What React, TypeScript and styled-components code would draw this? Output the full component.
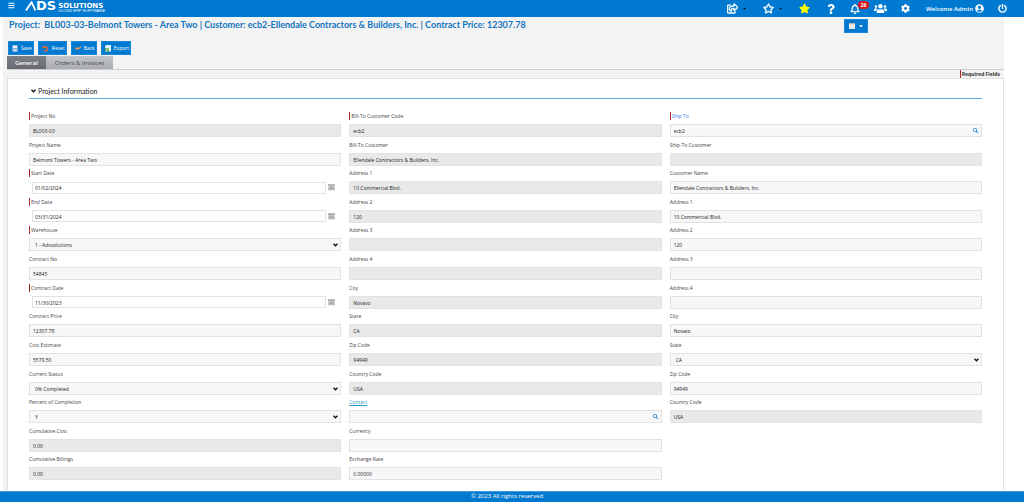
import React, { useId } from "react";
import styled, { createGlobalStyle, css } from "styled-components";
import {
  FaBars,
  FaCaretDown,
  FaCog,
  FaPowerOff,
  FaQuestion,
  FaRegBell,
  FaRegShareSquare,
  FaRegStar,
  FaSearch,
  FaStar,
  FaUserCircle,
  FaUsers,
} from "react-icons/fa";

const BLUE = "#007ad0";

const GlobalStyle = createGlobalStyle`
  * { box-sizing: border-box; }
  body {
    margin: 0;
    background: #fff;
    color: #444;
    font-family: "Open Sans", "Noto Sans", sans-serif;
    font-size: 5px;
  }
  button, input, select { font-family: inherit; }
`;

const Page = styled.div`
  display: flex;
  flex-direction: column;
  min-height: 100vh;
`;

/* ---------- top bar ---------- */

const TopBar = styled.header`
  display: flex;
  align-items: center;
  height: 17px;
  padding: 0 17px 0 8px;
  background: ${BLUE};
  color: #fff;
`;

const IconButton = styled.button<{ $color?: string }>`
  display: flex;
  align-items: center;
  gap: 4px;
  padding: 0;
  border: 0;
  background: none;
  color: ${(p) => p.$color ?? "#fff"};
  position: relative;
`;

const MenuButton = styled(IconButton)`
  margin: 0 10px 6px 0;
`;

const Brand = styled.a`
  display: flex;
  align-items: center;
  height: 12px;
  margin-bottom: 5px;
  color: #fff;
  text-decoration: none;
  font-family: "DejaVu Sans", sans-serif;
`;

const BrandMark = styled.span`
  font-size: 13px;
  line-height: 12px;
  font-weight: 700;
`;

const BrandWords = styled.span`
  display: flex;
  flex-direction: column;
  margin-left: 2px;
  padding-top: 4px;
`;

const BrandName = styled.span`
  font-size: 7px;
  line-height: 6px;
  font-weight: 700;
`;

const BrandTag = styled.span`
  font-family: "Liberation Sans", sans-serif;
  font-size: 4px;
  line-height: 4px;
`;

const Nav = styled.nav`
  display: flex;
  align-items: center;
  gap: 16px;
  margin-left: auto;
`;

const NavGroup = styled.div`
  display: flex;
  align-items: center;
  gap: 14px;
`;

const Caret = styled(FaCaretDown)`
  color: #111;
`;

const Badge = styled.span`
  position: absolute;
  left: 8px;
  top: -3px;
  width: 11px;
  height: 8px;
  border-radius: 4px;
  background: #d8141c;
  color: #fff;
  font-size: 5px;
  line-height: 8px;
  font-weight: 700;
  text-align: center;
`;

const Account = styled.a`
  display: flex;
  align-items: center;
  gap: 2px;
  margin-left: 2px;
  color: #fff;
  font-size: 6px;
  line-height: 8px;
  font-weight: 600;
  text-decoration: none;
`;

/* ---------- page heading ---------- */

const Main = styled.main`
  flex: 1;
  display: flex;
  flex-direction: column;
  margin: 0 20px 0 3px;
  padding-left: 4px;
  background: #f3f3f3;
`;

const Heading = styled.div`
  display: flex;
  align-items: flex-start;
  justify-content: space-between;
  padding: 2px 136px 0 2px;
`;

const Title = styled.h1`
  margin: 0;
  color: #1273c0;
  font-family: Lato, "Noto Sans", sans-serif;
  font-size: 9px;
  line-height: 11px;
  font-weight: 700;
  white-space: pre;
`;

const blueButton = css`
  display: flex;
  align-items: center;
  justify-content: center;
  height: 14px;
  border: 1px solid #1a86d6;
  background: ${BLUE};
  color: #fff;
`;

const ViewButton = styled.button`
  ${blueButton}
  gap: 3px;
  width: 24px;
  padding: 0;
`;

const Toolbar = styled.div`
  display: flex;
  gap: 4px;
  margin: 8px 0 1px 1px;
`;

const ToolButton = styled.button`
  ${blueButton}
  gap: 3px;
  padding: 0 1px 0 3px;
  font-size: 5px;
  line-height: 8px;
  font-weight: 400;
`;

const Tabs = styled.div`
  display: flex;
  border-bottom: 1px solid #cfcfcf;
`;

const Tab = styled.button<{ $active?: boolean }>`
  height: 13px;
  padding: 0 ${(p) => (p.$active ? "8px" : "9px")};
  border: 0;
  background: ${(p) =>
    p.$active
      ? "linear-gradient(#7d8084, #66696d)"
      : "linear-gradient(#c3c5c7, #a9adb1)"};
  color: ${(p) => (p.$active ? "#fff" : "#44474b")};
  font-size: 6px;
  line-height: 12px;
  font-weight: ${(p) => (p.$active ? 600 : 400)};
`;

const RequiredNote = styled.div`
  display: flex;
  justify-content: flex-end;
  padding-right: 4px;
  color: #333;
  font-size: 5px;
  line-height: 8px;
  font-weight: 700;
`;

/* ---------- form ---------- */

const Card = styled.section`
  flex: 1;
  display: flex;
  flex-direction: column;
  padding: 7px 21px 7px;
  border: 1px solid #e0e0e0;
  border-bottom: 0;
  background: #fff;
`;

const SectionTitle = styled.h2`
  display: flex;
  align-items: center;
  gap: 2px;
  margin: 0 0 13px;
  padding: 0 0 2px 2px;
  border-bottom: 1px solid #5caae0;
  color: #222;
  font-family: Lato, "Noto Sans", sans-serif;
  font-size: 7px;
  line-height: 10px;
  font-weight: 400;
`;

const Form = styled.form`
  flex: 1;
  display: grid;
  grid-template-columns: repeat(3, 1fr);
  column-gap: 8px;
`;

const Column = styled.div`
  display: grid;
  grid-template-rows: repeat(13, 1fr);
`;

const Field = styled.div`
  display: flex;
  flex-direction: column;
  gap: 4px;
`;

const Label = styled.label<{ $required?: boolean }>`
  align-self: flex-start;
  padding-left: ${(p) => (p.$required ? "1px" : "0")};
  border-left: ${(p) => (p.$required ? "1px solid #a52a2a" : "0")};
  font-size: 5px;
  line-height: 8px;

  a { color: #3d7bf0; text-decoration: none; }
  a.underlined { color: #2a93c4; text-decoration: underline; }
`;

const Control = styled.div`
  display: flex;
  align-items: center;
  position: relative;
  height: 13px;
`;

const boxStyle = css`
  height: 13px;
  border: 1px solid #e0e2e4;
  border-radius: 0;
  outline: 0;
  color: #222;
  font-size: 5px;
  line-height: 8px;
`;

const TextInput = styled.input`
  ${boxStyle}
  width: 100%;
  padding: 1px 3px 0;
  background: #f7f7f7;

  &:disabled { background: #e9e9e9; }
`;

const DateInput = styled.input`
  ${boxStyle}
  flex: 1;
  height: 12px;
  margin-left: 3px;
  padding: 1px 2px 0;
  background: #fff;
`;

const DateButton = styled.button`
  display: flex;
  margin: 0 6px 0 2px;
  padding: 0;
  border: 0;
  background: none;
`;

const Select = styled.select`
  ${boxStyle}
  width: 100%;
  padding: 1px 5px 0;
  appearance: none;
  background: #f7f7f7;
`;

const SelectArrow = styled.span`
  position: absolute;
  right: 3px;
  top: 5px;
  display: flex;
  pointer-events: none;
`;

const SearchButton = styled.button`
  position: absolute;
  right: 4px;
  top: 4px;
  display: flex;
  padding: 0;
  border: 0;
  background: none;
  color: #1b7fd0;
`;

const Footer = styled.footer`
  height: 11px;
  border-top: 1px solid #3f9ae0;
  background: ${BLUE};
  color: #fff;
  font-size: 6px;
  line-height: 9px;
  text-align: center;
  padding-right: 10px;
`;

/* ---------- drawings ---------- */

const Peak = () => (
  <svg width="11" height="10" viewBox="0 0 11 10" fill="none">
    <path d="M1 9.4 6.6 1.2 10.4 9.4" stroke="#fff" strokeWidth="1.8" />
  </svg>
);

const Chevron = () => (
  <svg width="5" height="4" viewBox="0 0 5 4" fill="none">
    <path d="M.5.8 2.5 2.8 4.5.8" stroke="#111" strokeWidth="1.4" />
  </svg>
);

const CalendarIcon = () => (
  <svg width="7" height="7" viewBox="0 0 7 7">
    <path d="M0 .5h7v6H0z" fill="#d0d0d0" />
    <path d="M0 .5h7v1H0z" fill="#909090" />
    <path d="M2.5 2.6h2v1h1v1h1v1h-6v-1h1v-1h1z" fill="#a6a6a6" />
  </svg>
);

const SaveIcon = () => (
  <svg width="6" height="7" viewBox="0 0 6 7">
    <path d="M0 .5h6v6H0z" fill="#7ba7e0" />
    <path d="M1 .5h4v2.6H1z" fill="#f4f7fb" />
    <path d="M1.2 4.3h3.6v2.2H1.2z" fill="#d8dfe8" />
  </svg>
);

const ResetIcon = () => (
  <svg width="7" height="7" viewBox="0 0 7 7" fill="none">
    <path d="M1.2 2h2.6a2 2 0 1 1-1.9 3" stroke="#d9683a" strokeWidth="1.4" />
    <path d="M0 2 2.3.1v3.8z" fill="#d9683a" />
  </svg>
);

const BackIcon = () => (
  <svg width="6" height="6" viewBox="0 0 6 6" fill="none">
    <path d="M1.5 3.4h2.6L6 1.8" stroke="#ef9a5c" strokeWidth="1.3" />
    <path d="M0 3.4 2.3 1.4v4z" fill="#ef9a5c" />
  </svg>
);

const ExportIcon = () => (
  <svg width="6" height="7" viewBox="0 0 6 7">
    <path d="M1 0h5v6.5H0V2z" fill="#e9f0f6" />
    <path d="M0 3.2h4v3.3H0z" fill="#4fae54" />
    <path d="m.8 5.8 2.3-2" stroke="#fff" strokeWidth=".8" />
  </svg>
);

const GridIcon = () => (
  <svg width="6" height="6" viewBox="0 0 6 6">
    <path d="M0 0h6v6H0z" fill="#efe9e4" />
    <path d="M0 0h6v1.3H0z" fill="#b9b4b0" />
  </svg>
);

/* ---------- data ---------- */

type FieldSpec = {
  label: string;
  value?: string;
  kind?: "text" | "date" | "select" | "search";
  required?: boolean;
  disabled?: boolean;
  link?: "plain" | "underlined";
};

const projectFields: FieldSpec[] = [
  { label: "Project No", value: "BL003-03", required: true, disabled: true },
  { label: "Project Name", value: "Belmont Towers - Area Two" },
  { label: "Start Date", value: "01/02/2024", kind: "date", required: true },
  { label: "End Date", value: "03/31/2024", kind: "date", required: true },
  { label: "Warehouse", value: "1 - Adssolutions", kind: "select", required: true },
  { label: "Contract No", value: "54845" },
  { label: "Contract Date", value: "11/30/2023", kind: "date", required: true },
  { label: "Contract Price", value: "12307.78" },
  { label: "Cost Estimate", value: "5579.50" },
  { label: "Current Status", value: "0% Completed", kind: "select" },
  { label: "Percent of Completion", value: "Y", kind: "select" },
  { label: "Cumulative Cost", value: "0.00", disabled: true },
  { label: "Cumulative Billings", value: "0.00", disabled: true },
];

const billToFields: FieldSpec[] = [
  { label: "Bill-To Customer Code", value: "ecb2", required: true, disabled: true },
  { label: "Bill-To Customer", value: "Ellendale Contractors & Builders, Inc.", disabled: true },
  { label: "Address 1", value: "10 Commercial Blvd.", disabled: true },
  { label: "Address 2", value: "120", disabled: true },
  { label: "Address 3", disabled: true },
  { label: "Address 4", disabled: true },
  { label: "City", value: "Novato", disabled: true },
  { label: "State", value: "CA", disabled: true },
  { label: "Zip Code", value: "94949", disabled: true },
  { label: "Country Code", value: "USA", disabled: true },
  { label: "Contact", kind: "search", link: "underlined" },
  { label: "Currency" },
  { label: "Exchange Rate", value: "0.00000" },
];

const shipToFields: FieldSpec[] = [
  { label: "Ship To", value: "ecb2", kind: "search", required: true, link: "plain" },
  { label: "Ship-To Customer", disabled: true },
  { label: "Customer Name", value: "Ellendale Contractors & Builders, Inc." },
  { label: "Address 1", value: "10 Commercial Blvd." },
  { label: "Address 2", value: "120" },
  { label: "Address 3" },
  { label: "Address 4" },
  { label: "City", value: "Novato" },
  { label: "State", value: "CA", kind: "select" },
  { label: "Zip Code", value: "94949" },
  { label: "Country Code", value: "USA", disabled: true },
];

function FormField({ label, value = "", kind = "text", required, disabled, link }: FieldSpec) {
  const id = useId();
  return (
    <Field>
      <Label htmlFor={id} $required={required}>
        {link ? <a href="#lookup" className={link}>{label}</a> : label}
      </Label>
      <Control>
        {kind === "date" && (
          <>
            <DateInput id={id} defaultValue={value} />
            <DateButton type="button" aria-label={`Pick ${label}`}>
              <CalendarIcon />
            </DateButton>
          </>
        )}
        {kind === "select" && (
          <>
            <Select id={id} defaultValue={value}>
              <option>{value}</option>
            </Select>
            <SelectArrow><Chevron /></SelectArrow>
          </>
        )}
        {(kind === "text" || kind === "search") && (
          <TextInput id={id} defaultValue={value} disabled={disabled} />
        )}
        {kind === "search" && (
          <SearchButton type="button" aria-label={`Search ${label}`}>
            <FaSearch size={5} />
          </SearchButton>
        )}
      </Control>
    </Field>
  );
}

export default function App() {
  return (
    <Page>
      <GlobalStyle />
      <TopBar>
        <MenuButton aria-label="Menu"><FaBars size={7} /></MenuButton>
        <Brand href="#home">
          <Peak />
          <BrandMark>DS</BrandMark>
          <BrandWords>
            <BrandName>SOLUTIONS</BrandName>
            <BrandTag>CLOUD ERP SOFTWARE</BrandTag>
          </BrandWords>
        </Brand>
        <Nav>
          <IconButton aria-label="Share">
            <FaRegShareSquare size={11} strokeWidth={24} />
            <Caret size={5} />
          </IconButton>
          <IconButton aria-label="Favorites">
            <FaRegStar size={11} strokeWidth={24} />
            <Caret size={5} />
          </IconButton>
          <IconButton aria-label="Add favorite" $color="#ffff00"><FaStar size={11} /></IconButton>
          <NavGroup>
            <IconButton aria-label="Help"><FaQuestion size={10} /></IconButton>
            <IconButton aria-label="Notifications">
              <FaRegBell size={10} strokeWidth={16} />
              <Badge>26</Badge>
            </IconButton>
            <IconButton aria-label="Users"><FaUsers size={13} /></IconButton>
            <IconButton aria-label="Settings"><FaCog size={9} /></IconButton>
            <Account href="#account">Welcome Admin<FaUserCircle size={9} /></Account>
            <IconButton aria-label="Log out"><FaPowerOff size={9} /></IconButton>
          </NavGroup>
        </Nav>
      </TopBar>

      <Main>
        <Heading>
          <Title>
            {"Project:  BL003-03-Belmont Towers - Area Two | Customer: ecb2-Ellendale Contractors & Builders, Inc. | Contract Price: 12307.78"}
          </Title>
          <ViewButton aria-label="View options"><GridIcon /><FaCaretDown size={6} /></ViewButton>
        </Heading>
        <Toolbar>
          <ToolButton><SaveIcon />Save</ToolButton>
          <ToolButton><ResetIcon />Reset</ToolButton>
          <ToolButton><BackIcon />Back</ToolButton>
          <ToolButton><ExportIcon />Export</ToolButton>
        </Toolbar>
        <Tabs>
          <Tab $active>General</Tab>
          <Tab>Orders &amp; Invoices</Tab>
        </Tabs>
        <RequiredNote><Label as="span" $required>Required Fields</Label></RequiredNote>
        <Card>
          <SectionTitle><Chevron />Project Information</SectionTitle>
          <Form>
            {[projectFields, billToFields, shipToFields].map((fields, i) => (
              <Column key={i}>
                {fields.map((field) => <FormField key={field.label} {...field} />)}
              </Column>
            ))}
          </Form>
        </Card>
      </Main>
      <Footer>© 2023 All rights reserved</Footer>
    </Page>
  );
}
